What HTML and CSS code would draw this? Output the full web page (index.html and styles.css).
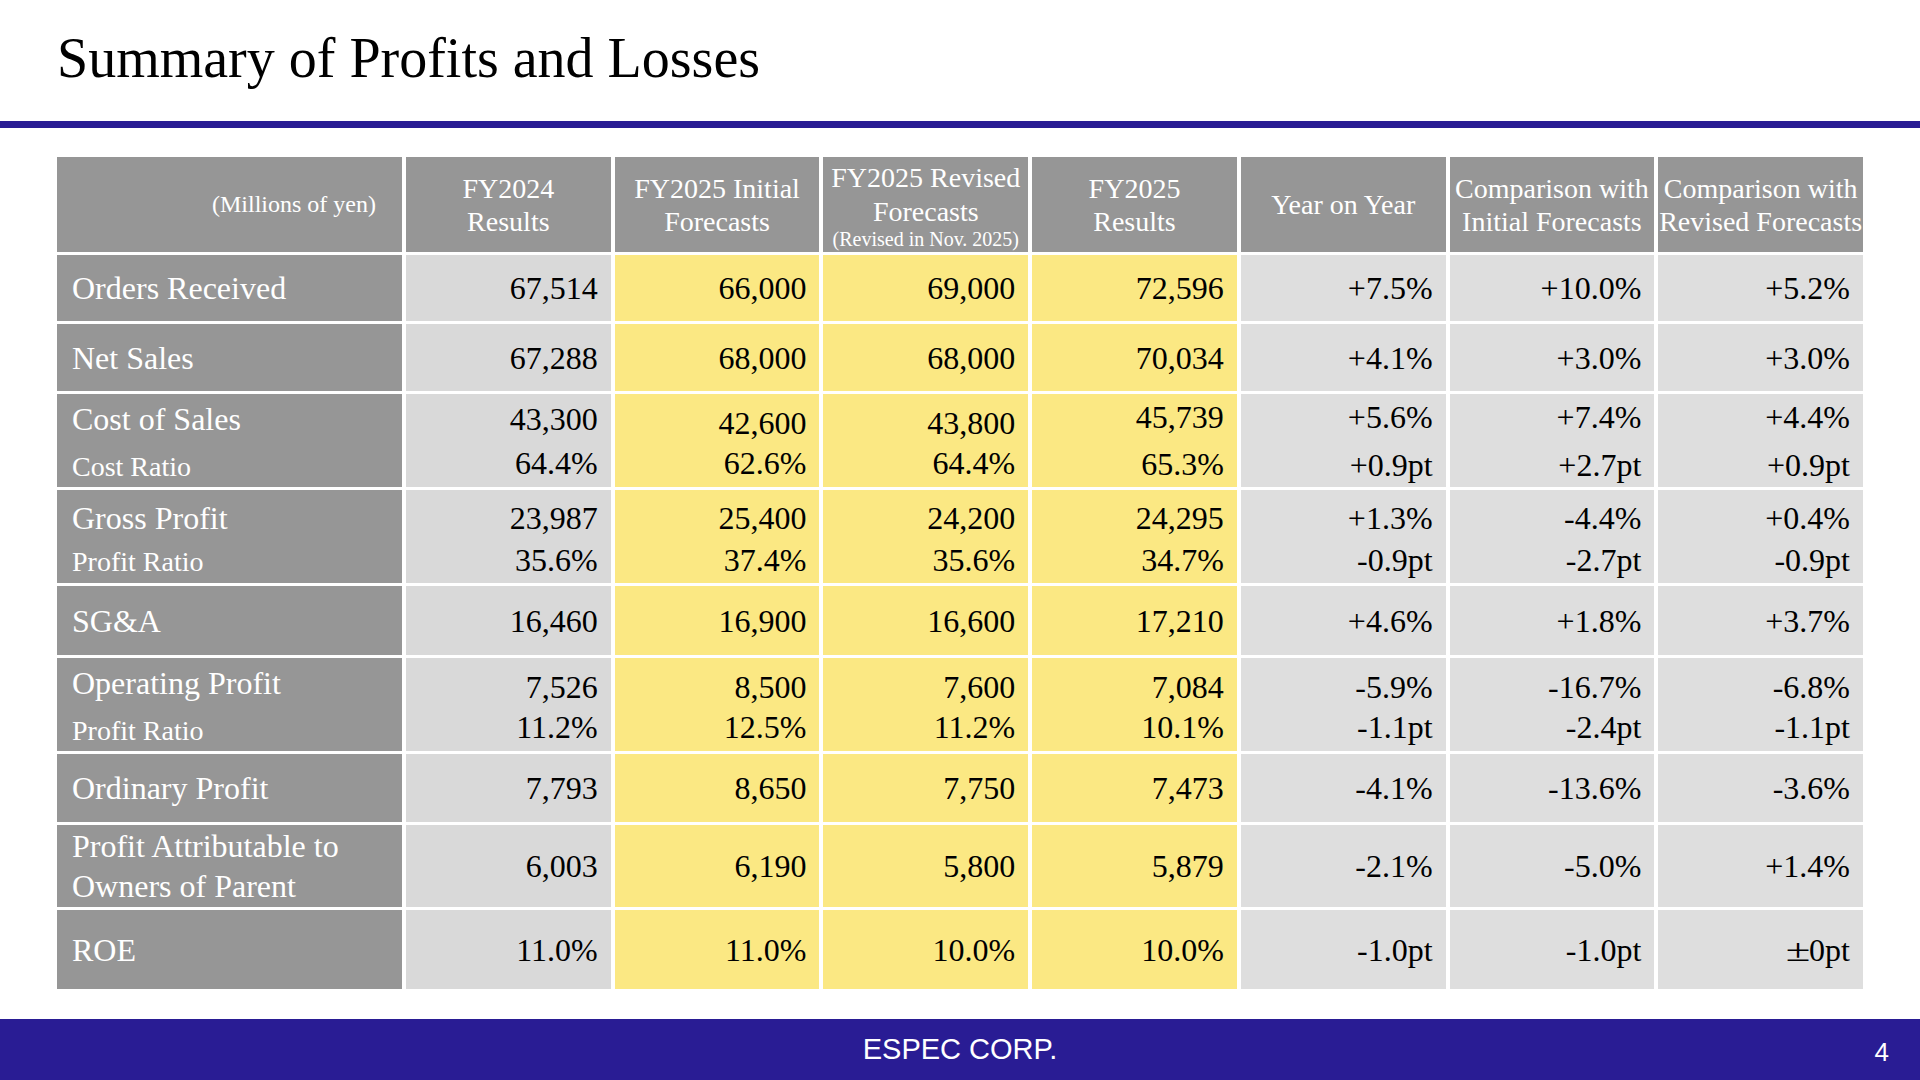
FILE: index.html
```html
<!DOCTYPE html>
<html lang="en">
  <head>
    <meta charset="UTF-8" />
    <meta name="viewport" content="width=device-width, initial-scale=1.0" />
    <title>Summary of Profits and Losses</title>
    <link rel="stylesheet" href="styles.css">
  </head>
  <body>
    <div class="slide">
      <header class="top">
        <h1>Summary of Profits and Losses</h1>
      </header>
      <div class="rule"></div>

      <div class="grid">
        <!-- header row -->
        <div class="cell head unit">(Millions of yen)</div>
        <div class="cell head">FY2024<br>Results</div>
        <div class="cell head">FY2025 Initial<br>Forecasts</div>
        <div class="cell head revised"><span>FY2025 Revised</span><span>Forecasts</span><small>(Revised in Nov. 2025)</small></div>
        <div class="cell head">FY2025<br>Results</div>
        <div class="cell head">Year on Year</div>
        <div class="cell head">Comparison with<br>Initial Forecasts</div>
        <div class="cell head">Comparison with<br>Revised Forecasts</div>

        <!-- orders received -->
        <div class="cell label">Orders Received</div>
        <div class="cell num past">67,514</div>
        <div class="cell num plan">66,000</div>
        <div class="cell num plan">69,000</div>
        <div class="cell num plan">72,596</div>
        <div class="cell num diff">+7.5%</div>
        <div class="cell num diff">+10.0%</div>
        <div class="cell num diff">+5.2%</div>

        <!-- net sales -->
        <div class="cell label">Net Sales</div>
        <div class="cell num past">67,288</div>
        <div class="cell num plan">68,000</div>
        <div class="cell num plan">68,000</div>
        <div class="cell num plan">70,034</div>
        <div class="cell num diff">+4.1%</div>
        <div class="cell num diff">+3.0%</div>
        <div class="cell num diff">+3.0%</div>

        <!-- cost of sales -->
        <div class="cell label lh47 down2"><span>Cost of Sales</span><span class="sub">Cost Ratio</span></div>
        <div class="cell num past lh44"><span>43,300</span><span>64.4%</span></div>
        <div class="cell num plan lh40 down2"><span>42,600</span><span>62.6%</span></div>
        <div class="cell num plan lh40 down2"><span>43,800</span><span>64.4%</span></div>
        <div class="cell num plan lh47"><span>45,739</span><span>65.3%</span></div>
        <div class="cell num diff lh48"><span>+5.6%</span><span>+0.9pt</span></div>
        <div class="cell num diff lh48"><span>+7.4%</span><span>+2.7pt</span></div>
        <div class="cell num diff lh48"><span>+4.4%</span><span>+0.9pt</span></div>

        <!-- gross profit -->
        <div class="cell label lh44 down3"><span>Gross Profit</span><span class="sub">Profit Ratio</span></div>
        <div class="cell num past lh42 down2"><span>23,987</span><span>35.6%</span></div>
        <div class="cell num plan lh42 down2"><span>25,400</span><span>37.4%</span></div>
        <div class="cell num plan lh42 down2"><span>24,200</span><span>35.6%</span></div>
        <div class="cell num plan lh42 down2"><span>24,295</span><span>34.7%</span></div>
        <div class="cell num diff lh42 down2"><span>+1.3%</span><span>-0.9pt</span></div>
        <div class="cell num diff lh42 down2"><span>-4.4%</span><span>-2.7pt</span></div>
        <div class="cell num diff lh42 down2"><span>+0.4%</span><span>-0.9pt</span></div>

        <!-- sg&a -->
        <div class="cell label">SG&amp;A</div>
        <div class="cell num past">16,460</div>
        <div class="cell num plan">16,900</div>
        <div class="cell num plan">16,600</div>
        <div class="cell num plan">17,210</div>
        <div class="cell num diff">+4.6%</div>
        <div class="cell num diff">+1.8%</div>
        <div class="cell num diff">+3.7%</div>

        <!-- operating profit -->
        <div class="cell label lh47 down2"><span>Operating Profit</span><span class="sub">Profit Ratio</span></div>
        <div class="cell num past lh40 down2"><span>7,526</span><span>11.2%</span></div>
        <div class="cell num plan lh40 down2"><span>8,500</span><span>12.5%</span></div>
        <div class="cell num plan lh40 down2"><span>7,600</span><span>11.2%</span></div>
        <div class="cell num plan lh40 down2"><span>7,084</span><span>10.1%</span></div>
        <div class="cell num diff lh40 down2"><span>-5.9%</span><span>-1.1pt</span></div>
        <div class="cell num diff lh40 down2"><span>-16.7%</span><span>-2.4pt</span></div>
        <div class="cell num diff lh40 down2"><span>-6.8%</span><span>-1.1pt</span></div>

        <!-- ordinary profit -->
        <div class="cell label">Ordinary Profit</div>
        <div class="cell num past">7,793</div>
        <div class="cell num plan">8,650</div>
        <div class="cell num plan">7,750</div>
        <div class="cell num plan">7,473</div>
        <div class="cell num diff">-4.1%</div>
        <div class="cell num diff">-13.6%</div>
        <div class="cell num diff">-3.6%</div>

        <!-- profit attributable -->
        <div class="cell label lh40"><span>Profit Attributable to</span><span>Owners of Parent</span></div>
        <div class="cell num past">6,003</div>
        <div class="cell num plan">6,190</div>
        <div class="cell num plan">5,800</div>
        <div class="cell num plan">5,879</div>
        <div class="cell num diff">-2.1%</div>
        <div class="cell num diff">-5.0%</div>
        <div class="cell num diff">+1.4%</div>

        <!-- roe -->
        <div class="cell label">ROE</div>
        <div class="cell num past">11.0%</div>
        <div class="cell num plan">11.0%</div>
        <div class="cell num plan">10.0%</div>
        <div class="cell num plan">10.0%</div>
        <div class="cell num diff">-1.0pt</div>
        <div class="cell num diff">-1.0pt</div>
        <div class="cell num diff"><span><span class="pm">±</span>0pt</span></div>
      </div>

      <footer class="bottom">
        <span></span>
        <span class="corp">ESPEC CORP.</span>
        <span class="page">4</span>
      </footer>
    </div>
  </body>
</html>
```

FILE: styles.css
```css
* {
  margin: 0;
  padding: 0;
  box-sizing: border-box;
}
html,
body {
  width: 100%;
  height: 100%;
  background: #fff;
  font-family: "Liberation Serif", "Times New Roman", serif;
}
.slide {
  width: 1920px;
  height: 1080px;
  display: flex;
  flex-direction: column;
  overflow: hidden;
}
.top {
  height: 121px;
  padding: 30px 0 0 57px;
}
.top h1 {
  font-size: 56px;
  line-height: 56px;
  font-weight: normal;
  color: #000;
}
.rule {
  height: 7px;
  background: #291c94;
}
.grid {
  display: grid;
  grid-template-columns: 345px repeat(7, 1fr);
  grid-template-rows: 95px 66px 67px 93px 93px 69px 93px 68px 82px 79px;
  column-gap: 4px;
  row-gap: 3px;
  width: 1806px;
  margin: 29px 0 0 57px;
}
.cell {
  display: flex;
  flex-direction: column;
  justify-content: center;
  font-size: 32px;
  line-height: 36px;
  color: #000;
  white-space: nowrap;
}
.head {
  background: #969696;
  color: #fff;
  font-size: 28px;
  line-height: 33px;
  text-align: center;
  align-items: center;
}
.head.unit {
  font-size: 24px;
  align-items: flex-end;
  padding-right: 26px;
}
.head.revised span {
  line-height: 34px;
}
.head.revised small {
  font-size: 20px;
  line-height: 20px;
}
.label {
  background: #969696;
  color: #fff;
  padding-left: 15px;
}
.label .sub {
  font-size: 28px;
}
.num {
  align-items: flex-end;
  padding-right: 13px;
}
.pm {
  display: inline-block;
  padding: 0 3px 0 4px;
  transform: scaleX(1.4);
}
.past {
  background: #d9d9d9;
}
.plan {
  background: #fbe883;
}
.diff {
  background: #dedede;
}
.lh40 {
  line-height: 40px;
}
.lh42 {
  line-height: 42px;
}
.lh44 {
  line-height: 44px;
}
.lh47 {
  line-height: 47px;
}
.lh48 {
  line-height: 48px;
}
.down2 {
  padding-top: 4px;
}
.down3 {
  padding-top: 6px;
}
.bottom {
  margin-top: auto;
  height: 61px;
  background: #291c94;
  color: #fff;
  font-family: "Liberation Sans", Arial, sans-serif;
  display: grid;
  grid-template-columns: 1fr auto 1fr;
  align-items: center;
}
.corp {
  font-size: 29px;
}
.page {
  justify-self: end;
  font-size: 26px;
  padding: 6px 31px 0 0;
}
```
